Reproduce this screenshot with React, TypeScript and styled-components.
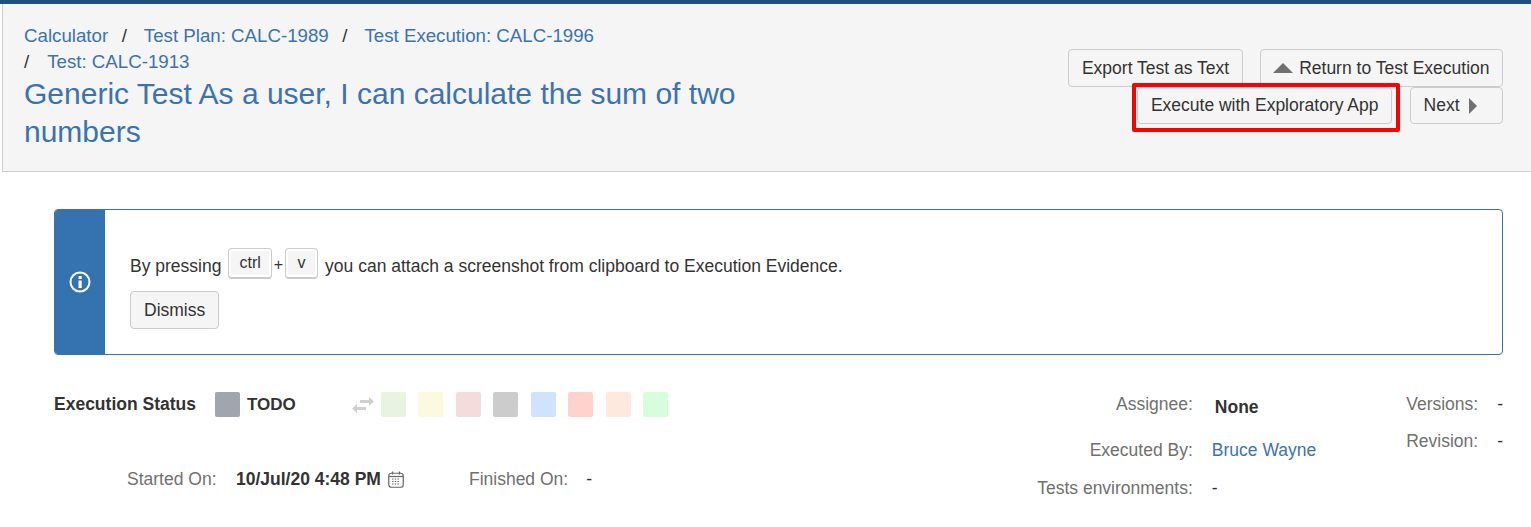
import React from 'react';
import styled, { createGlobalStyle } from 'styled-components';

const GlobalStyle = createGlobalStyle`
  html, body {
    margin: 0;
    padding: 0;
    background: #fff;
    overflow: hidden;
  }
  body {
    font-family: "Liberation Sans", Arial, sans-serif;
    font-size: 17.5px;
    color: #333;
  }
`;

const Page = styled.div`
  width: 1531px;
  height: 527px;
  overflow: hidden;
  border-top: 4px solid #205081;
  box-sizing: border-box;
`;

const Header = styled.header`
  height: 168px;
  box-sizing: border-box;
  margin-left: 2px;
  padding: 19px 28px 0 21px;
  background: #f5f5f5;
  border-left: 1px solid #ccc;
  border-bottom: 1px solid #ccc;
  display: flex;
  justify-content: space-between;
`;

const HeaderLeft = styled.div`
  width: 740px;
`;

const Breadcrumbs = styled.div`
  line-height: 26px;
  width: 640px;
  font-size: 18.7px;
`;

const Crumb = styled.a`
  color: #3b73af;
`;

const Slash = styled.span<{ $first?: boolean }>`
  margin: ${(p) => (p.$first ? '0 18px 0 0' : '0 17px 0 13.5px')};
`;

const Title = styled.h1`
  margin: 0;
  font-weight: 400;
  font-size: 30px;
  line-height: 38px;
  color: #3b73af;
`;

const Actions = styled.div`
  padding-top: 26px;
  display: flex;
  flex-direction: column;
  align-items: flex-end;
`;

const ActionRow = styled.div<{ $gap: number }>`
  display: flex;
  gap: ${(p) => p.$gap}px;
`;

const Button = styled.button<{ $height?: number }>`
  height: ${(p) => p.$height ?? 38}px;
  box-sizing: border-box;
  padding: 0 12.5px;
  background: #f5f5f5;
  border: 1px solid #ccc;
  border-radius: 4px;
  font-family: inherit;
  font-size: 17.5px;
  color: #333;
  display: inline-flex;
  align-items: center;
  gap: 6px;
`;

const DismissButton = styled(Button)`
  padding: 0 13px;
`;

const NextArrow = styled.svg`
  margin: 0 12px 0 3px;
`;

const Highlighted = styled.div`
  position: relative;
  display: flex;
`;

const RedBox = styled.div`
  position: absolute;
  top: -4px;
  left: -5px;
  right: -8px;
  bottom: -8px;
  border: 4px solid #f00;
  border-radius: 2px;
  pointer-events: none;
`;

const Content = styled.main`
  padding: 37px 28px 0 54px;
`;

const InfoBox = styled.section`
  height: 146px;
  box-sizing: border-box;
  display: flex;
  border: 1px solid #3572b0;
  border-radius: 4px;
  overflow: hidden;
`;

const InfoSide = styled.div`
  width: 50px;
  background: #3572b0;
  display: flex;
  align-items: center;
  justify-content: center;
`;

const InfoBody = styled.div`
  padding: 38px 25px 0;
`;

const InfoLine = styled.div`
  display: flex;
  align-items: center;
  height: 31px;
  margin-bottom: 12px;
`;

const Kbd = styled.kbd`
  height: 31px;
  min-width: 33px;
  box-sizing: border-box;
  padding: 0 10px;
  background: #f5f5f5;
  border: 1px solid #ccc;
  border-bottom-width: 2px;
  border-radius: 4px;
  box-shadow: inset 0 0 0 2px #fff;
  font-family: inherit;
  font-size: 16px;
  display: inline-flex;
  align-items: center;
  justify-content: center;
`;

const Plus = styled.span`
  margin: 0 2px;
  padding-top: 2px;
  font-size: 16px;
`;

const InfoText = styled.span<{ $left?: boolean }>`
  padding-top: 6px;
  ${(p) => (p.$left ? 'margin-right: 7px;' : 'margin-left: 7px;')}
`;

const Details = styled.section`
  margin-top: 37px;
  display: flex;
  justify-content: space-between;
`;

const DetailsLeft = styled.div`
  display: flex;
  flex-direction: column;
`;

const StatusRow = styled.div`
  display: flex;
  align-items: center;
  height: 25px;
`;

const StatusLabel = styled.strong`
  width: 161px;
  font-size: 17.5px;
`;

const Swatch = styled.span<{ $color: string }>`
  width: 25px;
  height: 25px;
  border-radius: 2px;
  background: ${(p) => p.$color};
`;

const CurrentStatus = styled.strong`
  width: 104px;
  margin-left: 7px;
  font-size: 17px;
`;

const SwatchGroup = styled.div`
  display: flex;
  align-items: center;
  gap: 12.5px;
`;

const TransitionIcon = styled.svg`
  margin-right: -7px;
`;

const DatesRow = styled.div`
  margin-top: 52px;
  padding-left: 73px;
  display: flex;
  align-items: center;
`;

const Label = styled.span`
  color: #707070;
`;

const DateValue = styled.strong`
  margin-left: 19.5px;
`;

const CalendarIcon = styled.svg`
  margin: 0 65px 0 7px;
`;

const Dash = styled.span`
  margin-left: 18px;
`;

const DetailsRight = styled.div`
  display: flex;
  margin-top: -11px;
`;

const Fields = styled.dl`
  margin: 0;
  display: grid;
  grid-template-columns: max-content max-content;
  grid-template-rows: 46px 46px 30px;
  column-gap: 19px;
  align-items: center;
  width: 279px;
`;

const FieldName = styled.dt`
  color: #707070;
  text-align: right;
`;

const FieldValue = styled.dd<{ $strong?: boolean }>`
  margin: 0;
  ${(p) => (p.$strong ? 'font-weight: 700; padding: 6px 0 0 3px;' : '')}
`;

const Versions = styled.dl`
  margin: 5px 0 0 90px;
  display: grid;
  grid-template-columns: max-content max-content;
  grid-auto-rows: 37px;
  align-items: center;
  align-content: start;
  column-gap: 19px;
`;

const UserLink = styled.a`
  color: #3b73af;
`;

const swatches = ['#e8f3e0', '#fbfadd', '#f5dcdc', '#cccccc', '#cfe2fe', '#ffd2cb', '#ffe9de', '#d6fedd'];

export default function App() {
  return (
    <Page>
      <GlobalStyle />
      <Header>
        <HeaderLeft>
          <Breadcrumbs>
            <Crumb>Calculator</Crumb>
            <Slash>/</Slash>
            <Crumb>Test Plan: CALC-1989</Crumb>
            <Slash>/</Slash>
            <Crumb>Test Execution: CALC-1996</Crumb>
            <br />
            <Slash $first>/</Slash>
            <Crumb>Test: CALC-1913</Crumb>
          </Breadcrumbs>
          <Title>Generic Test As a user, I can calculate the sum of two numbers</Title>
        </HeaderLeft>
        <Actions>
          <ActionRow $gap={17}>
            <Button>Export Test as Text</Button>
            <Button>
              <svg width="20" height="10" viewBox="0 0 20 10">
                <path d="M10 0 L20 10 L0 10 Z" fill="#707070" />
              </svg>
              Return to Test Execution
            </Button>
          </ActionRow>
          <ActionRow $gap={18}>
            <Highlighted>
              <Button $height={37}>Execute with Exploratory App</Button>
              <RedBox />
            </Highlighted>
            <Button $height={37}>
              Next
              <NextArrow width="9" height="16" viewBox="0 0 9 16">
                <path d="M0 0 L8 8 L0 16 Z" fill="#707070" />
              </NextArrow>
            </Button>
          </ActionRow>
        </Actions>
      </Header>
      <Content>
        <InfoBox>
          <InfoSide>
            <svg width="22" height="22" viewBox="0 0 22 22">
              <circle cx="11" cy="11" r="9.5" fill="none" stroke="#fff" strokeWidth="2" />
              <rect x="9.5" y="5" width="3.2" height="3" rx="0.5" fill="#fff" />
              <path d="M9.5 9.5h3.2v7.5h-3.2z" fill="#fff" />
            </svg>
          </InfoSide>
          <InfoBody>
            <InfoLine>
              <InfoText $left>By pressing</InfoText>
              <Kbd>ctrl</Kbd>
              <Plus>+</Plus>
              <Kbd>v</Kbd>
              <InfoText>you can attach a screenshot from clipboard to Execution Evidence.</InfoText>
            </InfoLine>
            <DismissButton>Dismiss</DismissButton>
          </InfoBody>
        </InfoBox>
        <Details>
          <DetailsLeft>
            <StatusRow>
              <StatusLabel>Execution Status</StatusLabel>
              <Swatch $color="#a1a5ae" />
              <CurrentStatus>TODO</CurrentStatus>
              <SwatchGroup>
                <TransitionIcon width="24" height="18" viewBox="0 0 24 18">
                  <path d="M9 4h9V1l5 4.5L18 10V7H9z" fill="#d0d0d0" />
                  <path d="M15 11H6V8l-5 4.5L6 17v-3h9z" fill="#d0d0d0" />
                </TransitionIcon>
                {swatches.map((c) => (
                  <Swatch key={c} $color={c} />
                ))}
              </SwatchGroup>
            </StatusRow>
            <DatesRow>
              <Label>Started On:</Label>
              <DateValue>10/Jul/20 4:48 PM</DateValue>
              <CalendarIcon width="16" height="17" viewBox="0 0 16 17">
                <rect x="0.75" y="2.25" width="14.5" height="14" rx="2.5" fill="none" stroke="#666" strokeWidth="1.2" />
                <path d="M1 5.5h14" stroke="#666" strokeWidth="1.2" />
                <path d="M4.5 0.5v3M11.5 0.5v3" stroke="#666" strokeWidth="1.2" />
                <path d="M4 8h8M4 10.5h8M4 13h8" stroke="#666" strokeWidth="1.2" strokeDasharray="1.5 1.2" />
              </CalendarIcon>
              <Label>Finished On:</Label>
              <Dash>-</Dash>
            </DatesRow>
          </DetailsLeft>
          <DetailsRight>
            <Fields>
              <FieldName>Assignee:</FieldName>
              <FieldValue $strong>None</FieldValue>
              <FieldName>Executed By:</FieldName>
              <FieldValue>
                <UserLink>Bruce Wayne</UserLink>
              </FieldValue>
              <FieldName>Tests environments:</FieldName>
              <FieldValue>-</FieldValue>
            </Fields>
            <Versions>
              <FieldName>Versions:</FieldName>
              <FieldValue>-</FieldValue>
              <FieldName>Revision:</FieldName>
              <FieldValue>-</FieldValue>
            </Versions>
          </DetailsRight>
        </Details>
      </Content>
    </Page>
  );
}
